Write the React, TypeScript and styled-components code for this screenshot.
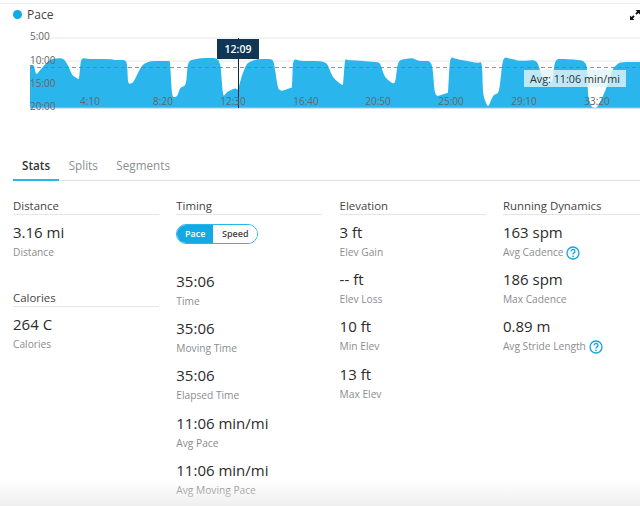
import React, { FC } from 'react';
import styled, { createGlobalStyle } from 'styled-components';

const GlobalStyle = createGlobalStyle`
  html, body { margin: 0; padding: 0; background: #fff; }
  body { width: 640px; height: 506px; overflow: hidden; font-family: "Open Sans", "Liberation Sans", sans-serif; color: #333; }
`;

type TStat = { value: string; label: string; help?: boolean };

const BLUE = '#2ab5ec';

// chart outline, read off the picture (x, y in page pixels)
const PACE_POINTS: [number, number][] = [
  [30, 65], [34, 65], [36, 75], [42, 68], [50, 59], [63, 58], [68, 65], [72, 75], [78, 79], [79, 79],
  [81, 58], [90, 59], [110, 59], [115, 60], [127, 60], [128, 84], [133, 83], [137, 75], [142, 65], [150, 61],
  [168, 61], [170, 61], [172, 97], [177, 97], [180, 88], [186, 85], [188, 61], [200, 58], [220, 58], [223, 97],
  [227, 92], [235, 88], [238, 90], [242, 75], [247, 63], [257, 59], [272, 59], [274, 63], [278, 89], [282, 91],
  [290, 88], [292, 88], [293, 59], [302, 61], [320, 61], [327, 63], [333, 78], [342, 85], [343, 85], [345, 59],
  [348, 60], [377, 62], [380, 63], [385, 78], [395, 85], [398, 60], [413, 58], [418, 61], [432, 61], [435, 97],
  [447, 93], [448, 93], [450, 57], [457, 59], [477, 63], [482, 62], [483, 95], [488, 108], [493, 95], [499, 93],
  [503, 57], [512, 59], [520, 61], [537, 60], [542, 78], [552, 85], [555, 59], [568, 59], [587, 61], [588, 97],
  [592, 108], [597, 108], [605, 92], [613, 68], [620, 62], [640, 62],
];

// keeps the outline but rounds each corner a little
const roundedLine = (points: [number, number][], amount = 0.3) => {
  let d = `L${points[0][0]} ${points[0][1]}`;
  for (let i = 1; i < points.length - 1; i++) {
    const [px, py] = points[i - 1];
    const [x, y] = points[i];
    const [nx, ny] = points[i + 1];
    d += ` L${x - (x - px) * amount} ${y - (y - py) * amount}`;
    d += ` Q${x} ${y} ${x + (nx - x) * amount} ${y + (ny - y) * amount}`;
  }
  const [lx, ly] = points[points.length - 1];
  return `${d} L${lx} ${ly}`;
};

const AREA_PATH = `M30 108 ${roundedLine(PACE_POINTS)} L640 108 Z`;

const Y_TICKS: [string, number][] = [['5:00', 36], ['10:00', 60], ['15:00', 83], ['20:00', 106]];
const X_TICKS: [string, number][] = [
  ['4:10', 90], ['8:20', 163], ['12:30', 233], ['16:40', 306],
  ['20:50', 378], ['25:00', 451], ['29:10', 524], ['33:20', 597],
];

const TIMING: TStat[] = [
  { value: '35:06', label: 'Time' },
  { value: '35:06', label: 'Moving Time' },
  { value: '35:06', label: 'Elapsed Time' },
  { value: '11:06 min/mi', label: 'Avg Pace' },
  { value: '11:06 min/mi', label: 'Avg Moving Pace' },
];
const ELEVATION: TStat[] = [
  { value: '3 ft', label: 'Elev Gain' },
  { value: '-- ft', label: 'Elev Loss' },
  { value: '10 ft', label: 'Min Elev' },
  { value: '13 ft', label: 'Max Elev' },
];
const DYNAMICS: TStat[] = [
  { value: '163 spm', label: 'Avg Cadence', help: true },
  { value: '186 spm', label: 'Max Cadence' },
  { value: '0.89 m', label: 'Avg Stride Length', help: true },
];

const Page = styled.div`
  position: relative;
  width: 640px;
  height: 506px;
  overflow: hidden;
  background: #fff;
`;

const ChartCard = styled.section`
  position: relative;
  height: 153px;
  margin-top: 3px;
  border-top: 1px solid #eceef0;
  box-sizing: border-box;
`;

const ChartHeader = styled.div`
  display: flex;
  align-items: center;
  gap: 5px;
  height: 20px;
  margin-bottom: 2px;
  padding-left: 13px;
  font-size: 12px;
  color: #444;
`;

const Dot = styled.span`
  width: 9px;
  height: 9px;
  border-radius: 50%;
  background: #0fa9e6;
`;

const ChartArea = styled.div`
  position: relative;
  height: 100px;
`;

const ChartSvg = styled.svg`
  display: block;
  width: 640px;
  height: 90px;
  font-family: "Open Sans", "Liberation Sans", sans-serif;
  font-size: 10px;
  fill: #666;
`;

const TimeTip = styled.div`
  position: absolute;
  left: 217px;
  top: 13px;
  width: 42px;
  height: 20px;
  background: #0f3654;
  color: #fff;
  font-size: 10.5px;
  font-weight: 600;
  line-height: 20px;
  text-align: center;
`;

const AvgBadge = styled.div`
  position: absolute;
  left: 524px;
  top: 44px;
  width: 102px;
  height: 17px;
  background: rgba(224, 243, 248, 0.82);
  color: #333;
  font-size: 10.8px;
  font-weight: 500;
  line-height: 17px;
  text-align: center;
  white-space: nowrap;
`;

const ExpandIcon = styled.svg`
  position: absolute;
  right: 0;
  top: 6px;
`;

const Tabs = styled.nav`
  display: flex;
  height: 24px;
  border-bottom: 1px solid #dfe3e6;
  margin-left: 13px;
`;

const Tab = styled.div<{ $active?: boolean }>`
  padding: 0 9px;
  margin-right: 0.5px;
  font-size: 11.7px;
  line-height: 18px;
  color: ${({ $active }) => ($active ? '#333' : '#8b8f92')};
  font-weight: ${({ $active }) => ($active ? 600 : 400)};
  border-bottom: ${({ $active }) => ($active ? `2px solid ${BLUE}` : 'none')};
  height: 23px;
`;

const Columns = styled.div`
  display: grid;
  grid-template-columns: repeat(4, 146px);
  column-gap: 17.3px;
  padding: 18px 0 0 13px;
`;

const Column = styled.div`
  display: flex;
  flex-direction: column;
`;

const SectionTitle = styled.h3<{ $spaced?: boolean }>`
  margin: ${({ $spaced }) => ($spaced ? '29px' : '0')} 0 0;
  height: 15px;
  border-bottom: 1px solid #e3e5e7;
  font-size: 11.4px;
  font-weight: 400;
  line-height: 14px;
  color: #444;
  white-space: nowrap;
`;

const StatBlock = styled.div`
  height: 47.2px;
  padding-top: 7px;
  box-sizing: border-box;
`;

const StatValue = styled.div`
  font-size: 15px;
  line-height: 20px;
  margin-bottom: 3px;
  color: #2b2b2b;
  white-space: nowrap;
`;

const StatLabel = styled.div`
  display: flex;
  align-items: center;
  gap: 3px;
  font-size: 10.2px;
  line-height: 15px;
  color: #8a8d90;
  white-space: nowrap;
`;

const Toggle = styled.div`
  display: flex;
  width: 82px;
  height: 20px;
  margin: 9px 0 20px;
  border: 1px solid ${BLUE};
  border-radius: 10px;
  box-sizing: border-box;
  overflow: hidden;
`;

const ToggleOption = styled.div<{ $on?: boolean }>`
  flex: ${({ $on }) => ($on ? '0 0 36px' : '1')};
  background: ${({ $on }) => ($on ? '#12a9e4' : '#fff')};
  color: ${({ $on }) => ($on ? '#fff' : '#444')};
  font-size: 9px;
  font-weight: 600;
  line-height: 18px;
  text-align: center;
`;

const BottomFade = styled.div`
  position: absolute;
  left: 0;
  right: 0;
  bottom: 0;
  height: 26px;
  background: linear-gradient(to bottom, rgba(235, 235, 235, 0), rgba(232, 232, 232, 0.7));
  pointer-events: none;
`;

const HelpIcon: FC = () => (
  <svg width="14" height="14" viewBox="0 0 14 14" fill="none">
    <circle cx="7" cy="7" r="6" stroke="#12a4e0" strokeWidth="1.3" />
    <path d="M5.1 5.4a1.9 1.9 0 1 1 3 1.5c-.7.5-1.1.8-1.1 1.6" stroke="#12a4e0" strokeWidth="1.3" />
    <circle cx="7" cy="10.4" r=".8" fill="#12a4e0" />
  </svg>
);

const Stat: FC<TStat> = ({ value, label, help }) => (
  <StatBlock>
    <StatValue>{value}</StatValue>
    <StatLabel>
      {label}
      {help && <HelpIcon />}
    </StatLabel>
  </StatBlock>
);

const PaceChart: FC = () => (
  <ChartArea>
    <ChartSvg viewBox="0 26 640 90">
      <line x1="30" x2="640" y1="38" y2="38" stroke="#e6e8ea" />
      <line x1="30" x2="640" y1="61" y2="61" stroke="#e6e8ea" />
      <path d={AREA_PATH} fill={BLUE} />
      <line x1="30" x2="640" y1="108" y2="108" stroke="#a9c6ee" />
      <line x1="30" x2="640" y1="67.5" y2="67.5" stroke="#777" strokeDasharray="4 3" strokeWidth="0.8" />
      <line x1="238.5" x2="238.5" y1="38" y2="108" stroke="#10293d" />
      {Y_TICKS.map(([text, y]) => (
        <text key={text} x="30" y={y + 3.5}>{text}</text>
      ))}
      {X_TICKS.map(([text, x]) => (
        <text key={text} x={x} y="104.5" textAnchor="middle">{text}</text>
      ))}
    </ChartSvg>
    <TimeTip>12:09</TimeTip>
    <AvgBadge>Avg: 11:06 min/mi</AvgBadge>
  </ChartArea>
);

export default function App() {
  return (
    <Page>
      <GlobalStyle />
      <ChartCard>
        <ChartHeader>
          <Dot />
          Pace
        </ChartHeader>
        <PaceChart />
        <ExpandIcon width="10" height="10" viewBox="0 0 10 10" fill="#111">
          <path d="M0 10V5.500l1.600 1.600L3.400 5.300l1.300 1.300-1.800 1.800L4.500 10zM10 0v4.500L8.400 2.900 6.600 4.700 5.300 3.400l1.800-1.800L5.500 0z" />
        </ExpandIcon>
      </ChartCard>
      <Tabs>
        <Tab $active>Stats</Tab>
        <Tab>Splits</Tab>
        <Tab>Segments</Tab>
      </Tabs>
      <Columns>
        <Column>
          <SectionTitle>Distance</SectionTitle>
          <Stat value="3.16 mi" label="Distance" />
          <SectionTitle $spaced>Calories</SectionTitle>
          <Stat value="264 C" label="Calories" />
        </Column>
        <Column>
          <SectionTitle>Timing</SectionTitle>
          <Toggle>
            <ToggleOption $on>Pace</ToggleOption>
            <ToggleOption>Speed</ToggleOption>
          </Toggle>
          {TIMING.map((s) => <Stat key={s.label} {...s} />)}
        </Column>
        <Column>
          <SectionTitle>Elevation</SectionTitle>
          {ELEVATION.map((s) => <Stat key={s.label} {...s} />)}
        </Column>
        <Column>
          <SectionTitle>Running Dynamics</SectionTitle>
          {DYNAMICS.map((s) => <Stat key={s.label} {...s} />)}
        </Column>
      </Columns>
      <BottomFade />
    </Page>
  );
}
